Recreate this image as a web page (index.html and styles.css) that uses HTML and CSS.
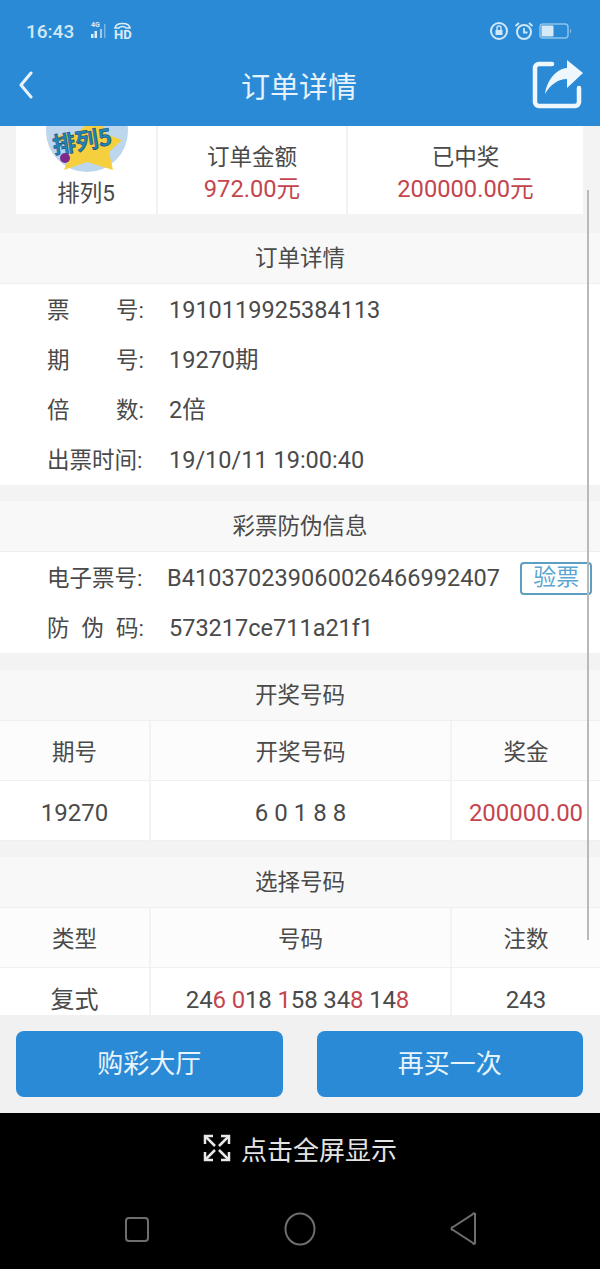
FILE: index.html
```html
<!DOCTYPE html>
<html lang="en">

<head>
    <meta charset="UTF-8">
    <meta name="viewport" content="width=device-width, initial-scale=1.0">
    <title>订单详情</title>
    <link rel="stylesheet" href="styles.css">
</head>

<body>
    <div class="app">

        <div class="topbar">
            <div class="statusbar">
                <div class="status-left">
                    <span class="time">16:43</span>
                    <svg width="48" height="20" viewBox="0 0 48 20">
                        <text x="7" y="6" class="tiny">4G</text>
                        <rect x="7" y="13" width="2.500" height="4" fill="#dcedf9"/>
                        <rect x="10.500" y="10" width="2.500" height="7" fill="#dcedf9"/>
                        <rect x="16" y="8" width="2" height="9" fill="#9ccbec"/>
                        <rect x="20" y="3" width="1.500" height="14" fill="#78b6e4"/>
                        <path d="M31 7c1-6 14-6 15 0h-4c-1-2-6-2-7 0z" fill="none" stroke="#dcedf9" stroke-width="1.600"/>
                        <text x="30" y="18" class="hd">HD</text>
                    </svg>
                </div>
                <div class="status-right">
                    <svg width="20" height="20" viewBox="0 0 20 20">
                        <circle cx="10" cy="10" r="8" fill="none" stroke="#cfe8f8" stroke-width="2"/>
                        <rect x="6.500" y="9" width="7" height="5" fill="#cfe8f8"/>
                        <path d="M8 9V7a2 2 0 0 1 4 0v2" fill="none" stroke="#cfe8f8" stroke-width="1.400"/>
                    </svg>
                    <svg width="20" height="20" viewBox="0 0 20 20">
                        <circle cx="10" cy="11" r="7" fill="none" stroke="#cfe8f8" stroke-width="2"/>
                        <path d="M10 7v4.500h3.500M1.500 5 5 2M18.500 5 15 2" fill="none" stroke="#cfe8f8" stroke-width="1.800"/>
                    </svg>
                    <svg width="34" height="20" viewBox="0 0 34 20">
                        <rect x="1" y="3" width="28" height="14" rx="3" fill="none" stroke="#8fc4ea" stroke-width="1.500"/>
                        <rect x="2.500" y="4.500" width="12" height="11" rx="1" fill="#d6e9f8"/>
                        <path d="M31 8c1.500 0 1.500 4 0 4z" fill="#8fc4ea"/>
                    </svg>
                </div>
            </div>
            <div class="navbar">
                <svg class="back" width="16" height="28" viewBox="0 0 16 28">
                    <path d="M13 2 3 14l10 12" fill="none" stroke="#e6f3fc" stroke-width="3" stroke-linecap="round" stroke-linejoin="round"/>
                </svg>
                <div class="nav-title">订单详情</div>
                <svg width="52" height="50" viewBox="0 0 52 50">
                    <path d="M20 4H7a4 4 0 0 0-4 4v34a4 4 0 0 0 4 4h36a4 4 0 0 0 4-4V28" fill="none" stroke="#eef7fd" stroke-width="4.500" stroke-linecap="round"/>
                    <path d="M13 34C15 20 24 9 35 8V0L51 13 35 28V19C26 19 18 25 13 34z" fill="#eef7fd"/>
                </svg>
            </div>
        </div>

        <div class="content">
            <div class="summary">
                <div class="summary-logo">
                    <svg class="logo" width="82" height="82" viewBox="0 0 82 82">
                        <circle cx="41" cy="41" r="41" fill="#bcd6ee"/>
                        <path d="M52 24 60 44 76 50 63 62 67 80 41 72 18 80 26 60 8 46 30 44z" fill="#f6cf3e"/>
                        <text x="8" y="64" class="logo-text" transform="rotate(-9 8 64)">排列5</text>
                        <circle cx="19" cy="68" r="5" fill="#7d2a8c"/>
                    </svg>
                    <div class="logo-name">排列5</div>
                </div>
                <div class="summary-cell cell-amount">
                    <div>订单金额</div>
                    <div class="red amount">972.00元</div>
                </div>
                <div class="summary-cell cell-prize">
                    <div>已中奖</div>
                    <div class="red amount">200000.00元</div>
                </div>
            </div>

            <div class="section first">
                <div class="section-title">订单详情</div>
                <div class="info">
                    <div class="info-row">
                        <div class="label"><span>票</span><span>号:</span></div>
                        <span class="value">1910119925384113</span>
                    </div>
                    <div class="info-row">
                        <div class="label"><span>期</span><span>号:</span></div>
                        <span class="value">19270期</span>
                    </div>
                    <div class="info-row">
                        <div class="label"><span>倍</span><span>数:</span></div>
                        <span class="value">2倍</span>
                    </div>
                    <div class="info-row">
                        <div class="label"><span>出票时间:</span></div>
                        <span class="value">19/10/11 19:00:40</span>
                    </div>
                </div>
            </div>

            <div class="section">
                <div class="section-title">彩票防伪信息</div>
                <div class="info">
                    <div class="info-row">
                        <div class="label"><span>电子票号:</span></div>
                        <span class="value ticket">B410370239060026466992407</span>
                        <span class="check-btn">验票</span>
                    </div>
                    <div class="info-row">
                        <div class="label"><span>防</span><span>伪</span><span>码:</span></div>
                        <span class="value">573217ce711a21f1</span>
                    </div>
                </div>
            </div>

            <div class="section wide-gap">
                <div class="section-title">开奖号码</div>
                <div class="table">
                    <div class="cell head">期号</div>
                    <div class="cell head">开奖号码</div>
                    <div class="cell head">奖金</div>
                    <div class="cell">19270</div>
                    <div class="cell">6 0 1 8 8</div>
                    <div class="cell red">200000.00</div>
                </div>
            </div>

            <div class="section">
                <div class="section-title">选择号码</div>
                <div class="table">
                    <div class="cell head">类型</div>
                    <div class="cell head">号码</div>
                    <div class="cell head">注数</div>
                    <div class="cell">复式</div>
                    <div class="cell picks">24<span class="red">6</span>&nbsp;<span class="red">0</span>18&nbsp;<span class="red">1</span>58&nbsp;34<span class="red">8</span>&nbsp;14<span class="red">8</span></div>
                    <div class="cell">243</div>
                </div>
            </div>

            <div class="scrollbar"></div>
        </div>

        <div class="footer">
            <div class="btn">购彩大厅</div>
            <div class="btn">再买一次</div>
        </div>

        <div class="system">
            <div class="fullscreen">
                <svg width="28" height="28" viewBox="0 0 28 28">
                    <path d="M2 10V2h8M18 2h8v8M2 18v8h8M26 18v8h-8" fill="none" stroke="#e8e8e8" stroke-width="2.500"/>
                    <path d="M3 3l9 9M25 3l-9 9M3 25l9-9M25 25l-9-9" fill="none" stroke="#e8e8e8" stroke-width="2.500"/>
                </svg>
                <span>点击全屏显示</span>
            </div>
            <div class="sysnav">
                <svg width="26" height="28" viewBox="0 0 26 28">
                    <rect x="2" y="3" width="22" height="23" rx="3" fill="none" stroke="#6e6e6e" stroke-width="2"/>
                </svg>
                <svg width="32" height="34" viewBox="0 0 32 34">
                    <ellipse cx="16" cy="17" rx="14.500" ry="15.500" fill="none" stroke="#6e6e6e" stroke-width="2"/>
                </svg>
                <svg width="28" height="34" viewBox="0 0 28 34">
                    <path d="M25 3v28a1 1 0 0 1-2 0L3 18a1.500 1.500 0 0 1 0-3L23 2a1 1 0 0 1 2 1z" fill="none" stroke="#6e6e6e" stroke-width="2"/>
                </svg>
            </div>
        </div>

    </div>
</body>

</html>
```

FILE: styles.css
```css
* {
    box-sizing: border-box;
}

body {
    margin: 0;
    font-family: Roboto, "Noto Sans CJK SC", sans-serif;
    color: #4a4a4a;
}

.app {
    width: 600px;
    height: 1269px;
    display: flex;
    flex-direction: column;
    overflow: hidden;
}

.red {
    color: #c4454e;
}

/* header */
.topbar {
    flex: none;
    height: 126px;
    background: #2b8ad6;
    color: #e6f3fc;
}

.statusbar {
    height: 54px;
    padding: 8px 27px 0 26px;
    display: flex;
    justify-content: space-between;
    align-items: center;
}

.status-left,
.status-right {
    display: flex;
    align-items: center;
}

.status-left {
    gap: 10px;
}

.status-right {
    gap: 5px;
}

.time {
    font-size: 19px;
    font-weight: 500;
    color: #cfe8f8;
}

.tiny {
    font-family: Roboto, sans-serif;
    font-size: 7px;
    font-weight: bold;
    fill: #dcedf9;
}

.hd {
    font-family: Roboto, sans-serif;
    font-size: 13px;
    font-weight: bold;
    fill: #dcedf9;
}

.navbar {
    height: 62px;
    padding: 0 16px 0 18px;
    display: flex;
    align-items: center;
    justify-content: space-between;
}

.nav-title {
    font-size: 29px;
}

.back {
    margin-right: 32px;
}

/* scrolling part */
.content {
    flex: none;
    position: relative;
    height: 889px;
    background: #f3f3f3;
    overflow: hidden;
    line-height: 30px;
}

.scrollbar {
    position: absolute;
    left: 587px;
    top: 64px;
    width: 2px;
    height: 750px;
    background: #b9b9b9;
}

.summary {
    height: 88px;
    margin: 0 17px 0 16px;
    background: #fff;
    display: flex;
    font-size: 22.500px;
}

.summary-logo {
    width: 142px;
    border-right: 2px solid #f2f2f2;
    display: flex;
    flex-direction: column;
    align-items: center;
    overflow: hidden;
}

.logo {
    flex: none;
    margin-top: -36px;
    margin-left: 1px;
}

.logo-text {
    font-family: "Noto Sans CJK SC", sans-serif;
    font-size: 23px;
    font-weight: bold;
    fill: #1f86b8;
    stroke: #123f70;
    stroke-width: 0.500px;
}

.logo-name {
    margin-top: 5px;
    line-height: 33px;
}

.summary-cell {
    padding-top: 15px;
    text-align: center;
    line-height: 32px;
}

.amount {
    font-size: 23.700px;
}

.cell-amount {
    width: 190px;
    border-right: 2px solid #f2f2f2;
}

.cell-prize {
    flex: 1;
}

.section {
    margin-top: 16px;
    background: #fff;
}

.section.first {
    margin-top: 19px;
}

.section.wide-gap {
    margin-top: 17px;
}

.section-title {
    height: 51px;
    background: #f8f8f8;
    border-bottom: 1px solid #efefef;
    font-size: 22.500px;
    line-height: 50px;
    text-align: center;
}

.info {
    padding-top: 1px;
}

.info-row {
    height: 50px;
    padding-left: 47px;
    display: flex;
    align-items: center;
    font-size: 22.500px;
}

.label {
    width: 97px;
    display: flex;
    justify-content: space-between;
}

.value {
    margin-left: 25px;
    font-size: 23.500px;
}

.value.ticket {
    margin-left: 23px;
    letter-spacing: 0.060px;
}

.check-btn {
    width: 72px;
    height: 33px;
    margin-left: 20px;
    border: 2px solid #5b9fc2;
    border-radius: 4px;
    color: #5ba6d0;
    font-size: 23px;
    line-height: 28px;
    text-align: center;
    flex: none;
}

.table {
    display: grid;
    grid-template-columns: 149px 301px 150px;
}

.cell {
    height: 60px;
    padding-top: 4px;
    display: flex;
    align-items: center;
    justify-content: center;
    border-left: 2px solid #f3f3f3;
    border-bottom: 1px solid #f0f0f0;
    font-size: 24px;
}

.cell:nth-child(3n+1) {
    border-left: none;
}

.cell.head {
    padding-top: 2px;
    background: #fcfcfc;
    font-size: 22.500px;
}

.cell.picks {
    padding-right: 6px;
    letter-spacing: -0.150px;
}

/* bottom buttons */
.footer {
    flex: none;
    height: 98px;
    padding: 16px 17px 0 16px;
    background: #f1f1f1;
    display: flex;
    gap: 34px;
}

.btn {
    flex: 1;
    height: 66px;
    background: #2b8ad6;
    border-radius: 8px;
    color: #e8f4fc;
    font-size: 26px;
    line-height: 66px;
    text-align: center;
}

/* black bar of the phone */
.system {
    flex: 1;
    background: #000;
    color: #e4e4e4;
}

.fullscreen {
    height: 76px;
    padding-left: 203px;
    padding-bottom: 6px;
    display: flex;
    align-items: center;
    gap: 10px;
    font-size: 26px;
}

.sysnav {
    height: 80px;
    padding-left: 124px;
    display: flex;
    align-items: center;
    gap: 134px;
}
```
